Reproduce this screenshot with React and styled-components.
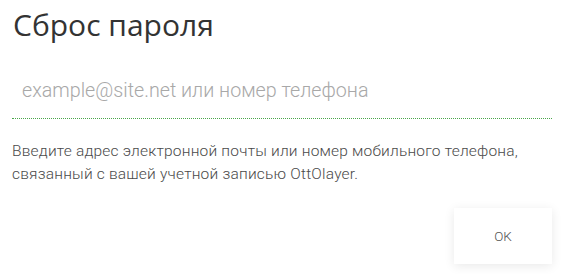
import React from "react";
import styled, { createGlobalStyle } from "styled-components";

const Global = createGlobalStyle`
  html, body { margin: 0; padding: 0; background: #fff; }
  body { width: 573px; height: 274px; overflow: hidden; }
`;

const Dialog = styled.div`
  box-sizing: border-box;
  width: 573px;
  padding: 5px 21px 0 12px;
  display: flex;
  flex-direction: column;
`;

const Title = styled.h1`
  margin: 0;
  font-family: "Open Sans", sans-serif;
  font-weight: 400;
  font-size: 30px;
  line-height: 40px;
  color: #333;
  padding-left: 1px;
`;

const Field = styled.div`
  margin-top: 34px;
  border-bottom: 1px dotted #4aa64a;
  padding: 0 10px 15px;
`;

const Input = styled.input`
  display: block;
  width: 100%;
  height: 24px;
  border: none;
  outline: none;
  padding: 0;
  font-family: Roboto, sans-serif;
  font-weight: 300;
  font-size: 19.7px;
  line-height: 24px;
  color: #333;
  background: transparent;
  &::placeholder { color: #a8a8a8; }
`;

const Hint = styled.p`
  margin: 21px 0 0;
  font-family: Roboto, sans-serif;
  font-weight: 300;
  font-size: 15.5px;
  letter-spacing: 0.2px;
  line-height: 23px;
  color: #4a4a4a;
`;

const Actions = styled.div`
  display: flex;
  justify-content: flex-end;
  margin-top: 22px;
`;

const Button = styled.button`
  width: 98px;
  height: 56px;
  border: none;
  background: #fff;
  box-shadow: 0 2px 10px rgba(0, 0, 0, 0.09);
  font-family: Roboto, sans-serif;
  font-weight: 300;
  font-size: 13.5px;
  color: #555;
  cursor: pointer;
`;

export default function App() {
  return (
    <>
      <Global />
      <Dialog>
        <Title>Сброс пароля</Title>
        <Field>
          <Input placeholder="example@site.net или номер телефона" />
        </Field>
        <Hint>
          Введите адрес электронной почты или номер мобильного телефона,
          <br />
          связанный с вашей учетной записью OttOlayer.
        </Hint>
        <Actions>
          <Button>OK</Button>
        </Actions>
      </Dialog>
    </>
  );
}
